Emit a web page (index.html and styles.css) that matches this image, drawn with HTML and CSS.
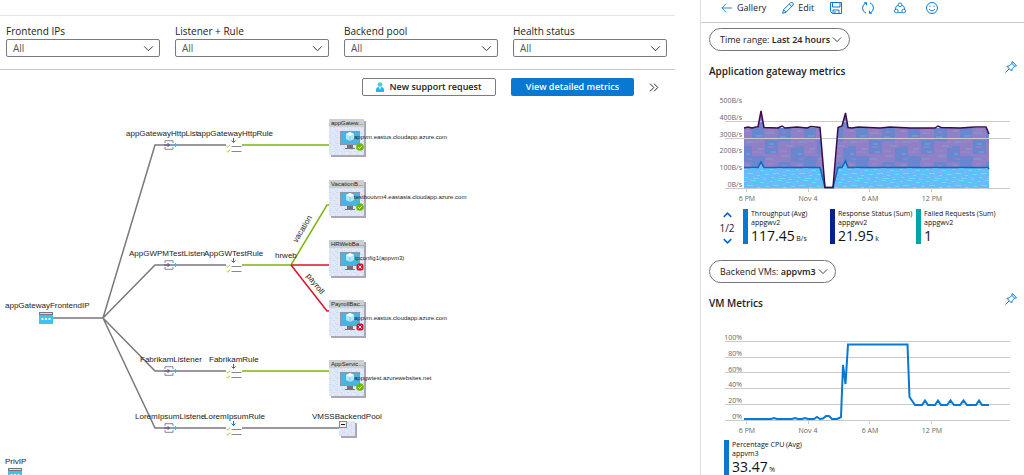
FILE: index.html
```html
<!DOCTYPE html>
<html lang="en">
<head>
<meta charset="utf-8">
<meta name="viewport" content="width=device-width, initial-scale=1">
<title>Application gateway insights</title>
<link rel="stylesheet" href="styles.css">
</head>
<body>
<svg class="defs" width="0" height="0" aria-hidden="true">
  <defs>
    <symbol id="chevron" viewBox="0 0 12 8"><path d="M1 1.5 6 6.5 11 1.5"/></symbol>
    <symbol id="pin" viewBox="0 0 12 12"><path d="M.5 11.5 4.2 7.8M2 5.4 6.6 10 7.3 7.6 9.7 5.2 11.5 4.8 7.3.5 6.8 2.4 4.4 4.8ZM6.8 2.4 9.7 5.2"/></symbol>
  </defs>
</svg>
<div class="shell">
  <main class="topology">
    <form class="filters">
      <div class="field">
        <label for="ips">Frontend IPs</label>
        <div class="pick"><select id="ips"><option>All</option></select><svg><use href="#chevron"/></svg></div>
      </div>
      <div class="field">
        <label for="rule">Listener + Rule</label>
        <div class="pick"><select id="rule"><option>All</option></select><svg><use href="#chevron"/></svg></div>
      </div>
      <div class="field">
        <label for="pool">Backend pool</label>
        <div class="pick"><select id="pool"><option>All</option></select><svg><use href="#chevron"/></svg></div>
      </div>
      <div class="field">
        <label for="health">Health status</label>
        <div class="pick"><select id="health"><option>All</option></select><svg><use href="#chevron"/></svg></div>
      </div>
    </form>
    <div class="actions">
      <button class="btn btn-outline"><svg viewBox="0 0 8 10"><path class="person-body" d="M0 10V8q0-3 3-3h2q3 0 3 3v2z"/><circle class="person-head" cx="4" cy="2.6" r="2.4"/><path class="person-tie" d="M3 5h2L4 8z"/></svg>New support request</button>
      <button class="btn btn-solid">View detailed metrics</button>
      <button class="more" aria-label="Expand metrics"><svg viewBox="0 0 10 9"><path d="M1 .7 4.8 4.5 1 8.3M5 .7 8.8 4.5 5 8.3"/></svg></button>
    </div>
    <svg class="graph" viewBox="0 100 700 375" role="img" aria-label="Gateway topology">
      <defs>
        <pattern id="speckle" width="7" height="6" patternUnits="userSpaceOnUse">
          <rect width="7" height="6" fill="#e0e7f8"/>
          <path d="M0 0h2v1H0zM4 2h2v1H4zM1 4h1v1H1z" fill="#c7ddf6"/>
          <path d="M3 0h1v1H3zM6 4h1v2H6zM1 2h1v1H1z" fill="#eed2f1"/>
          <path d="M5 0h1v1H5zM3 4h2v1H3z" fill="#d3f5f6"/>
        </pattern>
        <symbol id="frontend" viewBox="0 0 14 12">
          <rect width="14" height="12" fill="#39c5ee"/><rect width="14" height="3" fill="#777"/><path d="M1 1.5h12" stroke="#ddd"/>
          <path d="M2.5 6h2v2h-2zM6 6h2v2H6zM9.500 6h2v2h-2z" fill="#fff"/>
        </symbol>
        <symbol id="listener" viewBox="0 0 14 10">
          <path d="M1 3V.7h8V3M1 7v2.300h8V7" fill="#fff" stroke="#8b8297"/>
          <path d="M0 5h5M3.500 3 5.500 5 3.500 7" fill="none" stroke="#664b88"/>
          <path d="M7 5h6M11 3l2 2-2 2" fill="none" stroke="#45b4ee"/>
        </symbol>
        <symbol id="rule-icon" viewBox="0 0 16 15">
          <rect y="6" width="16" height="3" fill="#fff"/>
          <path d="M7.500 0v4M5.500 2.500l2 2 2-2" fill="none" stroke="#0078d4"/>
          <path d="m.5 8 1.200 1L4 6.800M.5 13l1.200 1L4 11.800" fill="none" stroke="#9bcb13"/>
          <path d="M5.500 8.500h10M5.500 13.500h10" stroke="#888"/>
        </symbol>
        <symbol id="pool-box" viewBox="0 0 38 39">
          <rect x="2" y="2" width="35" height="36" fill="#aaa7b6"/>
          <rect width="35" height="36" fill="url(#speckle)"/>
          <rect width="35" height="8" fill="#cdd0d0"/>
          <rect x="11" y="12" width="20" height="14" fill="#8c97a6"/><rect x="12" y="13" width="18" height="12" fill="#47b5df"/>
          <path d="m17 15 4-2 4 2v5l-4 2-4-2z" fill="#b8e6fb"/><path d="m17 15 4 2 4-2-4-2z" fill="#f3fcff"/><path d="M21 17v5" stroke="#7bc8ee"/>
          <path d="M18 26h6v3h2v1H16v-1h2z" fill="#77717e"/>
        </symbol>
        <symbol id="ok" viewBox="0 0 8 8"><circle cx="4" cy="4" r="3.800" fill="#6bb700"/><path d="m2 4 1.500 1.500L6 2.800" fill="none" stroke="#fff"/></symbol>
        <symbol id="bad" viewBox="0 0 8 8"><rect x=".5" y=".5" width="7" height="7" rx="2" fill="#d5142c"/><path d="m2.500 2.500 3 3m0-3-3 3" stroke="#fff"/></symbol>
      </defs>

      <g class="edge">
        <path d="M52 318H103L155 145H228M103 318 155 265H228M103 318 155 371H228M103 318 155 428H340"/>
        <path class="healthy" d="M241 145H330M241 265H291L327 205H331M241 371H330"/>
        <path class="failed" d="M291 265H330M291 265 327 311H331"/>
      </g>

      <use href="#frontend" x="39" y="312" width="14" height="12"/>
      <use href="#frontend" x="8" y="468" width="14" height="12"/>
      <use href="#listener" x="164" y="140" width="14" height="10"/>
      <use href="#listener" x="164" y="260" width="14" height="10"/>
      <use href="#listener" x="164" y="366" width="14" height="10"/>
      <use href="#listener" x="164" y="423" width="14" height="10"/>
      <use href="#rule-icon" x="226" y="138" width="16" height="15"/>
      <use href="#rule-icon" x="226" y="258" width="16" height="15"/>
      <use href="#rule-icon" x="226" y="364" width="16" height="15"/>
      <use href="#rule-icon" x="226" y="421" width="16" height="15"/>
      <use href="#pool-box" x="329" y="119" width="38" height="39"/>
      <use href="#pool-box" x="329" y="180" width="38" height="39"/>
      <use href="#pool-box" x="329" y="240" width="38" height="39"/>
      <use href="#pool-box" x="329" y="300" width="38" height="39"/>
      <use href="#pool-box" x="329" y="360" width="38" height="39"/>
      <rect x="341" y="423" width="16" height="15" fill="#aaa7b6"/><rect x="339" y="421" width="16" height="15" fill="url(#speckle)"/>
      <rect x="339.500" y="421.500" width="7" height="6" fill="#f4f4f4" stroke="#888"/><path d="M341 424.500h4" stroke="#111"/>

      <g class="name">
        <text x="5" y="308">appGatewayFrontendIP</text>
        <text x="5" y="464">PrivIP</text>
        <text x="126" y="136">appGatewayHttpList</text><text x="197" y="136">appGatewayHttpRule</text>
        <text x="129" y="256">AppGWPMTestListen</text><text x="204" y="256">AppGWTestRule</text>
        <text x="140" y="362">FabrikamListener</text><text x="209" y="362">FabrikamRule</text>
        <text x="135" y="419">LoremIpsumListene</text><text x="204" y="419">LoremIpsumRule</text>
        <text x="312" y="419">VMSSBackendPool</text>
        <text x="275" y="258">hrweb</text>
        <text transform="translate(297 243) rotate(-59)">vacation</text>
        <text transform="translate(306 276) rotate(52)">payroll</text>
      </g>
      <g class="pool">
        <text x="331" y="125">appGatew...</text>
        <text x="331" y="186">VacationB...</text>
        <text x="331" y="246">HRWebBa...</text>
        <text x="331" y="306">PayrollBac...</text>
        <text x="331" y="366">AppServic...</text>
        <text x="354" y="139">appvm.eastus.cloudapp.azure.com</text>
        <text x="354" y="199">testboutvm4.eastasia.cloudapp.azure.com</text>
        <text x="355" y="260">ipconfig1(appvm3)</text>
        <text x="354" y="320">appvm.eastus.cloudapp.azure.com</text>
        <text x="354" y="380">appgwtest.azurewebsites.net</text>
      </g>
      <use href="#ok" x="356" y="143" width="8" height="8"/>
      <use href="#ok" x="356" y="203" width="8" height="8"/>
      <use href="#bad" x="356" y="263" width="8" height="8"/>
      <use href="#bad" x="356" y="323" width="8" height="8"/>
      <use href="#ok" x="356" y="383" width="8" height="8"/>
    </svg>
  </main>

  <aside class="metrics">
    <nav class="toolbar">
      <button><svg viewBox="0 0 14 12"><path d="M13 6H1M6 1 1 6l5 5"/></svg>Gallery</button>
      <button><svg viewBox="0 0 12 12"><path d="m.7 11.300.8-3.600L8.500.8q1.300-.8 2.200 0 1.200 1 .3 2.300L4 10.300ZM1.500 7.700 4 10.300M7.300 2l2.500 2.500"/></svg>Edit</button>
      <button aria-label="Save"><svg viewBox="0 0 12 12"><path d="M.5.5h11v11H2.500l-2-2ZM2.500.5v4.500h7.500V.5M3 11.500V8h6v3.500M5 9v2.500"/></svg></button>
      <button aria-label="Refresh"><svg viewBox="0 0 12 12"><path d="M4.500.8Q.5 2.300.5 6t3.500 5.200M2 .8h2.500v2.500M7.500 11.200Q11.500 9.700 11.500 6T8 .8M10 11.200H7.500V8.700"/></svg></button>
      <button aria-label="Share"><svg viewBox="0 0 13 12"><circle cx="6.500" cy="2.500" r="2"/><circle cx="2.500" cy="9.300" r="2"/><circle cx="10.500" cy="9.300" r="2"/><path d="M4.500 3Q1.500 4 1.500 7M8.500 3q3 1 3 4M4.500 11h4"/></svg></button>
      <button aria-label="Feedback"><svg viewBox="0 0 12 12"><circle cx="6" cy="6" r="5.500"/><path d="M4 3.700v1.200M8 3.700v1.200M3 7q3 3.700 6 0"/></svg></button>
    </nav>

    <section class="panel">
      <button class="pill">Time range: <b>Last 24 hours</b><svg><use href="#chevron"/></svg></button>
      <header class="head"><h2>Application gateway metrics</h2><button aria-label="Pin gateway metrics"><svg><use href="#pin"/></svg></button></header>
      <svg class="chart" viewBox="701 90 323 116" role="img" aria-label="Application gateway metrics chart">
        <defs>
          <pattern id="violet" x="744" y="128" width="52" height="34" patternUnits="userSpaceOnUse">
            <rect width="52" height="34" fill="#9180c6"/>
            <path d="M8 0h12v11H8zM34 0h13v13H34zM21 12h13v14H21zM0 18h8v16H0zM47 20h5v14h-5zM8 28h13v6H8z" fill="#6a86cf"/>
            <path d="M1 3h5M22 5h8M12 8h7M36 9h6M2 14h8M25 16h5M42 18h7M13 21h6M27 24h5M2 26h4M37 28h8M22 31h7" stroke="#7fa5cf"/>
            <path d="M24 2h6M38 4h4M10 13h9M47 14h4M24 19h6M9 24h9M36 23h7M3 31h5" stroke="#a487cc"/>
          </pattern>
          <pattern id="sky" x="744" y="168" width="26" height="12" patternUnits="userSpaceOnUse">
            <rect width="26" height="12" fill="#62bdf8"/>
            <path d="M0 1.500h3M7 .5h5M16 2.500h4M3 5.500h6M13 7.500h3M21 6.500h4M1 9.500h3M9 10.500h6M19 11.500h3" stroke="#64e0fa"/>
            <path d="M4 2.500h3M12 4.500h4M22 3.500h3M0 7.500h2M8 8.500h3M17 9.500h5M4 11.500h3" stroke="#93aef5"/>
          </pattern>
        </defs>
        <path fill="url(#violet)" d="M744 128H758L761 111 764 128H820L825 188H833L838 128 842 126 845.500 113 848 128H987L989 133V188H744Z"/>
        <path fill="url(#sky)" d="M744 168H758L761 162 764 168H820L825 188H833L838 168H842L845.500 161 848 168H989V188H744Z"/>
        <path class="grid" d="M725 121.500H1010M725 138.500H1010M725 188.500H1010M746.500 188v4M808.500 188v4M869.500 188v4M931.500 188v4"/>
        <path class="throughput" d="M744 167.500H758L761 162 764 167.500H820L825 187.500H833L838 167.500H842L845.500 161 848 167.500H988L989 169"/>
        <path class="status" d="M744 128 748 127 752 128 756 127 758 127 761 111 764 127.500 778 128 782 126 785 128 797 127 807 128 811 126.500 820 127.500 825 187.500H833L838 127.500 842 126 845.500 113 848 127.500 852 128 858 127 880 128 890 127 910 128 935 128 938 126 941 127.500 960 128 975 127 986 127 989 134"/>
        <g class="axis">
          <g class="right"><text x="742" y="103">500B/s</text><text x="742" y="120">400B/s</text><text x="742" y="137">300B/s</text><text x="742" y="153">200B/s</text><text x="742" y="170">100B/s</text><text x="742" y="187">0B/s</text></g>
          <g class="mid"><text x="747" y="201">6 PM</text><text x="808" y="201">Nov 4</text><text x="870" y="201">6 AM</text><text x="932" y="201">12 PM</text></g>
        </g>
      </svg>
      <div class="legend">
        <div class="pager"><button aria-label="Previous"><svg><use href="#chevron"/></svg></button><span>1/2</span><button aria-label="Next"><svg><use href="#chevron"/></svg></button></div>
        <div class="stat blue"><b>Throughput (Avg)</b><span>appgwv2</span><strong>117.45 <small>B/s</small></strong></div>
        <div class="stat navy"><b>Response Status (Sum)</b><span>appgwv2</span><strong>21.95 <small>k</small></strong></div>
        <div class="stat teal"><b>Failed Requests (Sum)</b><span>appgwv2</span><strong>1</strong></div>
      </div>
    </section>

    <section class="panel">
      <button class="pill">Backend VMs: <b>appvm3</b><svg><use href="#chevron"/></svg></button>
      <header class="head"><h2>VM Metrics</h2><button aria-label="Pin VM metrics"><svg><use href="#pin"/></svg></button></header>
      <svg class="chart" viewBox="701 321 323 116" role="img" aria-label="VM CPU chart">
        <path class="grid" d="M725 340.500H1010M725 356.500H1010M725 371.500H1010M725 387.500H1010M725 403.500H1010M725 419.500H1010M746.500 419v4M808.500 419v4M869.500 419v4M931.500 419v4"/>
        <path class="cpu" d="M744 418 771 418 774 417 777 418 792 418 795 417 798 418 802 418 805 417 808 418 814 418 817 416 820 418 823 417.500 826 415 829 415 832 418H837L841 416 843 364 845.500 383 848 343.500H907.500L909.500 396 915 404H922L925 399.500 928 404H935L938 399.500 941 404H947L950.500 399.500 954 404H960L963.500 399.500 967 404H976L979 399.500 982 404H989"/>
        <g class="axis">
          <g class="right"><text x="742" y="339">100%</text><text x="742" y="355">80%</text><text x="742" y="371">60%</text><text x="742" y="386">40%</text><text x="742" y="402">20%</text><text x="742" y="418">0%</text></g>
          <g class="mid"><text x="747" y="432">6 PM</text><text x="808" y="432">Nov 4</text><text x="870" y="432">6 AM</text><text x="932" y="432">12 PM</text></g>
        </g>
      </svg>
      <div class="legend single">
        <div class="stat blue"><b>Percentage CPU (Avg)</b><span>appvm3</span><strong>33.47 <small>%</small></strong></div>
      </div>
    </section>
  </aside>
</div>
</body>
</html>
```
FILE: styles.css
```css
* { box-sizing: border-box; }
body { margin: 0; background: #fff; color: #222; font: 10px/12px "Open Sans", "Noto Sans", sans-serif; }
button { font: inherit; color: inherit; background: none; border: 0; padding: 0; margin: 0; cursor: pointer; }
svg { display: block; fill: none; stroke: currentColor; }
.defs { position: absolute; }

.shell { display: grid; grid-template-columns: 700fr 324fr; height: 100vh; overflow: hidden; }
.topology { min-width: 0; overflow: hidden; padding-top: 15px; }

.filters { display: grid; grid-template-columns: repeat(4, 1fr); gap: 15px; padding: 9px 8px 12px 6px; margin-right: 25px; border-top: 1px solid #f4daf4; border-bottom: 1px solid #c8c6c8; }
.field { display: flex; flex-direction: column; gap: 2px; }
.pick { display: grid; align-items: center; }
.pick > * { grid-area: 1 / 1; }
.pick select { appearance: none; width: 100%; height: 18px; padding: 0 6px; border: 1px solid #7d7882; border-radius: 2px; background: #fff; color: #555; font: inherit; }
.pick svg { width: 11px; height: 7px; justify-self: end; margin-right: 6px; pointer-events: none; }

.actions { display: flex; gap: 15px; align-items: center; justify-content: flex-end; padding: 8px 41px 4px 0; }
.btn { display: flex; align-items: center; justify-content: center; gap: 5px; height: 18px; border-radius: 2px; font-weight: 600; font-size: 9px; }
.btn-outline { width: 134px; border: 1px solid #7d7882; }
.btn-outline svg { width: 8px; height: 10px; stroke: none; }
.person-body { fill: #27b4e8; }
.person-head { fill: #4cc9ee; }
.person-tie { fill: #fff; }
.btn-solid { width: 123px; background: #0878d3; color: #fff; }
.more svg { width: 10px; height: 9px; }

.graph { width: 100%; stroke: none; font-family: "Liberation Sans", Arial, sans-serif; fill: #222; }
.edge { fill: none; stroke: #7c767d; stroke-width: 1.5; }
.healthy { stroke: #7db60b; }
.failed { stroke: #d9142c; }
.name { font-size: 8px; }
.pool { font-size: 6px; }

.metrics { min-width: 0; overflow: hidden; border-left: 1px solid #ead6ef; }
.toolbar { display: flex; align-items: center; gap: 20px; height: 23px; padding: 0 20px 6px; border-bottom: 1px solid #c8cfc8; }
.toolbar button { display: flex; align-items: center; gap: 4px; height: 16px; }
.toolbar button:nth-child(-n+2) { margin-right: -4px; }
.toolbar button:first-child { font-size: 9px; }
.toolbar button:nth-child(2) { font-size: 9px; }
.toolbar svg { width: 12px; height: 12px; color: #0878d3; }

.panel { padding-top: 5px; }
.panel + .panel { padding-top: 16px; }
.pill { display: flex; align-items: center; height: 23px; margin-left: 8px; padding: 0 7px 0 10px; border: 1px solid #77727c; border-radius: 12px; font-size: 9px; white-space: pre; }
.pill b { font-weight: 600; }
.pill svg { width: 10px; height: 7px; margin-left: 2px; }
.head { display: flex; align-items: center; justify-content: space-between; height: 16px; margin: 12px 7px 11px 8px; }
.head h2 { margin: 0; font-size: 10px; font-weight: 600; }
.head button { color: #0878d3; padding-bottom: 8px; }
.head svg { width: 12px; height: 12px; }

.chart { width: 100%; stroke: none; }
.grid { stroke: #cbcbcb; }
.throughput { fill: none; stroke: #1264c0; stroke-width: 1.5; }
.status { fill: none; stroke: #3d0a4c; stroke-width: 1.5; }
.cpu { fill: none; stroke: #0878d3; stroke-width: 2; }
.axis { font-size: 7px; fill: #666; }
.right { text-anchor: end; }
.mid { text-anchor: middle; }

.legend { display: grid; grid-template-columns: 25px 87px 86px 1fr; align-items: center; padding: 2px 0 0 17px; }
.legend.single { grid-template-columns: 1fr; padding-left: 23px; }
.pager { display: flex; flex-direction: column; align-items: center; gap: 4px; width: 18px; padding-top: 4px; }
.pager svg { width: 9px; height: 6px; color: #0862cb; stroke-width: 2; }
.pager button:first-child svg { transform: rotate(180deg); }
.stat { display: flex; flex-direction: column; height: 35px; padding-left: 3px; border-left: 5px solid; font-size: 7px; line-height: 9px; white-space: nowrap; }
.stat > * { color: #111; }
.stat b { font-weight: 500; }
.stat strong { font-size: 14px; line-height: 18px; font-weight: 500; }
.stat small { font-size: 7px; margin-left: -2px; }
.blue { border-color: #0878d3; }
.navy { border-color: #062191; }
.teal { border-color: #00a5a5; }
```
